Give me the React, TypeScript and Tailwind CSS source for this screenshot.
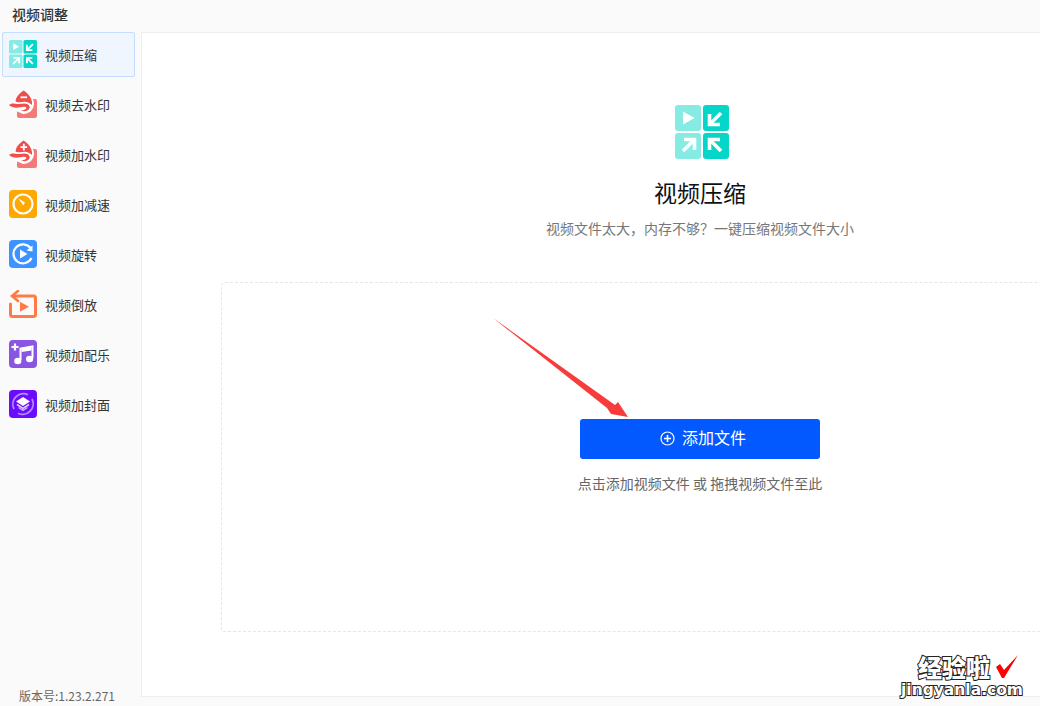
import React from "react";

const font = { fontFamily: '"Noto Sans CJK SC", "Liberation Sans", sans-serif' };

function CompressIcon({ size }: { size: number }) {
  return (
    <svg width={size} height={size} viewBox="0 0 54 54" className="shrink-0">
      <rect x="0" y="0" width="26" height="26" rx="3" fill="#85ebe3" />
      <rect x="28" y="0" width="26" height="26" rx="3" fill="#05d6c8" />
      <rect x="0" y="28" width="26" height="26" rx="3" fill="#85ebe3" />
      <rect x="28" y="28" width="26" height="26" rx="3" fill="#05d6c8" />
      <path d="M8 6.5 L19.5 13 L8 19.5 Z" fill="#fff" />
      <g stroke="#fff" strokeWidth="3.6" fill="none">
        <path d="M46 8 L36 18" />
        <path d="M34.5 9 V19.5 H45" />
        <path d="M8 46 L18 36" />
        <path d="M9 34.5 H19.5 V45" />
        <path d="M46 46 L36 36" />
        <path d="M34.5 45 V34.5 H45" />
      </g>
    </svg>
  );
}

function WatermarkIcon({ plus }: { plus: boolean }) {
  return (
    <svg width="28" height="28" viewBox="0 0 28 28" className="shrink-0">
      <path d="M8 14 H18 V9 H26 Q28 9 28 11 V26 Q28 28 26 28 H10 Q8 28 8 26 Z" fill="#f47a78" />
      <path d="M14.5 -1 C10 2 5.5 6 5 13 L5 20 L14 24 C20 24 25 20 25 13 C24.5 7 19 2 14.5 -1 Z" fill="#fff" />
      <path d="M14.5 0.5 C11 3 7 6 6.5 11.5 C9 13 13 12 15 11.8 C18 11.5 21 13 23 15 C23.8 8.5 19 3 14.5 0.5 Z" fill="#ee4f4d" />
      <path d="M0 15 C3 12.5 6 13.5 9 14 C12 14.5 15 12.5 18 14 C21 15.5 21.5 18 19.5 19.8 C17.5 21.5 14.5 21.5 12 20.5 C14.5 20.3 17 19.8 17.5 18 C17 16.3 14 16.5 11 17.2 C7 18.2 3 17.5 0 15 Z" fill="#ee4f4d" />
      {plus ? (
        <path d="M14.8 3.8 V10.4 M11.5 7.1 H18.1" stroke="#fff" strokeWidth="1.8" />
      ) : (
        <path d="M11.5 7.3 H18.1" stroke="#fff" strokeWidth="1.8" />
      )}
    </svg>
  );
}

function SpeedIcon() {
  return (
    <svg width="28" height="28" viewBox="0 0 28 28" className="shrink-0">
      <rect width="28" height="28" rx="4" fill="#ffa800" />
      <circle cx="14" cy="14" r="9.5" fill="none" stroke="#fff" strokeWidth="2.2" />
      <path d="M9.5 8.5 L16 12.6 L14.2 15.6 Z" fill="#fff" />
    </svg>
  );
}

function RotateIcon() {
  return (
    <svg width="28" height="28" viewBox="0 0 28 28" className="shrink-0">
      <rect width="28" height="28" rx="4" fill="#3d93ff" />
      <path d="M22.5 18 A9.5 9.5 0 1 1 21.6 8.2" fill="none" stroke="#fff" strokeWidth="2.2" />
      <path d="M23.5 5.5 L23.5 11.5 L17.5 10.5 Z" fill="#fff" />
      <path d="M11 9.5 L18.5 14 L11 18.5 Z" fill="#fff" />
    </svg>
  );
}

function ReverseIcon() {
  return (
    <svg width="28" height="28" viewBox="0 0 28 28" className="shrink-0">
      <path d="M4 6 H24.5 A2 2 0 0 1 26.5 8 V24.5 A2 2 0 0 1 24.5 26.5 H3.5 A2 2 0 0 1 1.5 24.5 V14" fill="none" stroke="#ff7a45" strokeWidth="3" strokeLinecap="round" />
      <path d="M9 1 L3 6 L9 11" fill="none" stroke="#ff7a45" strokeWidth="2.6" strokeLinecap="round" />
      <path d="M11 11.7 L20 16.7 L11 21.7 Z" fill="#ff7a45" />
    </svg>
  );
}

function MusicIcon() {
  return (
    <svg width="28" height="28" viewBox="0 0 28 28" className="shrink-0">
      <rect width="28" height="28" rx="4" fill="#8a55e0" />
      <path d="M6 3.5 V10.5 M2.5 7 H9.5" stroke="#fff" strokeWidth="2.2" />
      <path d="M11.5 20 V8.5 L23.5 6.5 V18" fill="none" stroke="#fff" strokeWidth="2" />
      <path d="M12.5 8.5 L22.5 7 V10.5 L12.5 12 Z" fill="#fff" />
      <ellipse cx="8.8" cy="21" rx="3.6" ry="3.2" fill="#fff" />
      <ellipse cx="20.6" cy="19" rx="3.6" ry="3.2" fill="#fff" />
    </svg>
  );
}

function CoverIcon() {
  return (
    <svg width="28" height="28" viewBox="0 0 28 28" className="shrink-0">
      <rect width="28" height="28" rx="4" fill="#6a0dff" />
      <path d="M5 19 A10.5 10.5 0 0 1 19 4.8" fill="none" stroke="#b68cff" strokeWidth="1.8" />
      <path d="M23 9 A10.5 10.5 0 0 1 9 23.2" fill="none" stroke="#b68cff" strokeWidth="1.8" />
      <path d="M14 7 L21 11.5 L14 16 L7 11.5 Z" fill="#fff" />
      <path d="M8 14.5 L14 18.4 L20 14.5" fill="none" stroke="#e3d4ff" strokeWidth="1.5" />
      <path d="M9.5 17.5 L14 20.4 L18.5 17.5" fill="none" stroke="#cdb3ff" strokeWidth="1.3" />
    </svg>
  );
}

const items: { label: string; icon: React.ReactNode; active?: boolean }[] = [
  { label: "视频压缩", icon: <CompressIcon size={28} />, active: true },
  { label: "视频去水印", icon: <WatermarkIcon plus={false} /> },
  { label: "视频加水印", icon: <WatermarkIcon plus={true} /> },
  { label: "视频加减速", icon: <SpeedIcon /> },
  { label: "视频旋转", icon: <RotateIcon /> },
  { label: "视频倒放", icon: <ReverseIcon /> },
  { label: "视频加配乐", icon: <MusicIcon /> },
  { label: "视频加封面", icon: <CoverIcon /> },
];

export default function App() {
  return (
    <div className="relative flex h-[706px] w-[1040px] flex-col overflow-hidden bg-[#fafafa]" style={font}>
      <div className="flex h-[32px] shrink-0 items-center pb-[4px] pl-3 text-[14px] font-medium leading-none text-[#333]">视频调整</div>
      <div className="flex h-[672px] shrink-0 items-start">
        <aside className="flex h-[672px] w-[141px] shrink-0 flex-col">
          <div className="flex grow flex-col gap-[5px] pl-[2px]">
            {items.map((it) => (
              <div
                key={it.label}
                className={`flex h-[45px] w-[133px] items-center gap-2 rounded-[2px] pb-[2px] text-[13px] text-[#333] ${it.active ? "border border-[#c3dcff] bg-[#f0f6ff] pl-[6px]" : "pl-[7px]"}`}
              >
                {it.icon}
                <span className="pt-[2px]">{it.label}</span>
              </div>
            ))}
          </div>
          <div className="h-[17px] pl-[19px] text-[12px] leading-[17px] text-[#666]">版本号:1.23.2.271</div>
        </aside>
        <main className="flex h-[665px] w-[1117px] shrink-0 flex-col items-center border-b border-l border-t border-[#eeeeee] bg-white px-[79px] pt-[72px]">
          <div className="ml-[4px]">
            <CompressIcon size={54} />
          </div>
          <div className="mt-[16px] text-[23px] leading-[34px] text-[#111]">视频压缩</div>
          <div className="mt-[9px] text-[14px] leading-[20px] text-[#777]">视频文件太大，内存不够？一键压缩视频文件大小</div>
          <div className="mt-[44px] flex h-[350px] w-full shrink-0 flex-col items-center rounded-[4px] border border-dashed border-[#e6e6e6] pt-[136px]">
            <button className="flex h-[40px] w-[240px] items-center justify-center gap-[7px] rounded-[3px] bg-[#0259ff] pb-[2px] pl-[6px] text-[16px] text-white">
              <svg width="15" height="15" viewBox="0 0 15 15">
                <circle cx="7.5" cy="7.5" r="6.5" fill="none" stroke="#fff" strokeWidth="1.2" />
                <path d="M7.5 4 V11 M4 7.5 H11" stroke="#fff" strokeWidth="1.6" />
              </svg>
              <span className="pb-[2px]">添加文件</span>
            </button>
            <div className="mt-[14px] text-[14px] leading-[20px] text-[#666]">点击添加视频文件 或 拖拽视频文件至此</div>
          </div>
        </main>
      </div>

      <svg className="absolute left-[480px] top-[310px]" width="160" height="120" viewBox="0 0 160 120">
        <path d="M13 8 L135 95 L138 92 L148 107 L131 104 L127 98 Z" fill="#f83c3c" />
      </svg>

      <div className="absolute left-[918px] top-[652px] text-[24px] font-black leading-[30px] text-white [-webkit-text-stroke:2px_#222] [paint-order:stroke_fill]">经验啦</div>
      <svg className="absolute left-[996px] top-[655px]" width="23" height="24" viewBox="0 0 23 24">
        <path d="M0 12 L4 9 L8 15 L22 0 L8 23 L6 23 Z" fill="#ff0000" />
      </svg>
      <div className="absolute left-[901px] top-[678px] text-[15.5px] font-bold leading-[24px] text-white [-webkit-text-stroke:2px_#222] [paint-order:stroke_fill]" style={{ fontFamily: '"DejaVu Sans", sans-serif' }}>
        jingyanla.com
      </div>
    </div>
  );
}
